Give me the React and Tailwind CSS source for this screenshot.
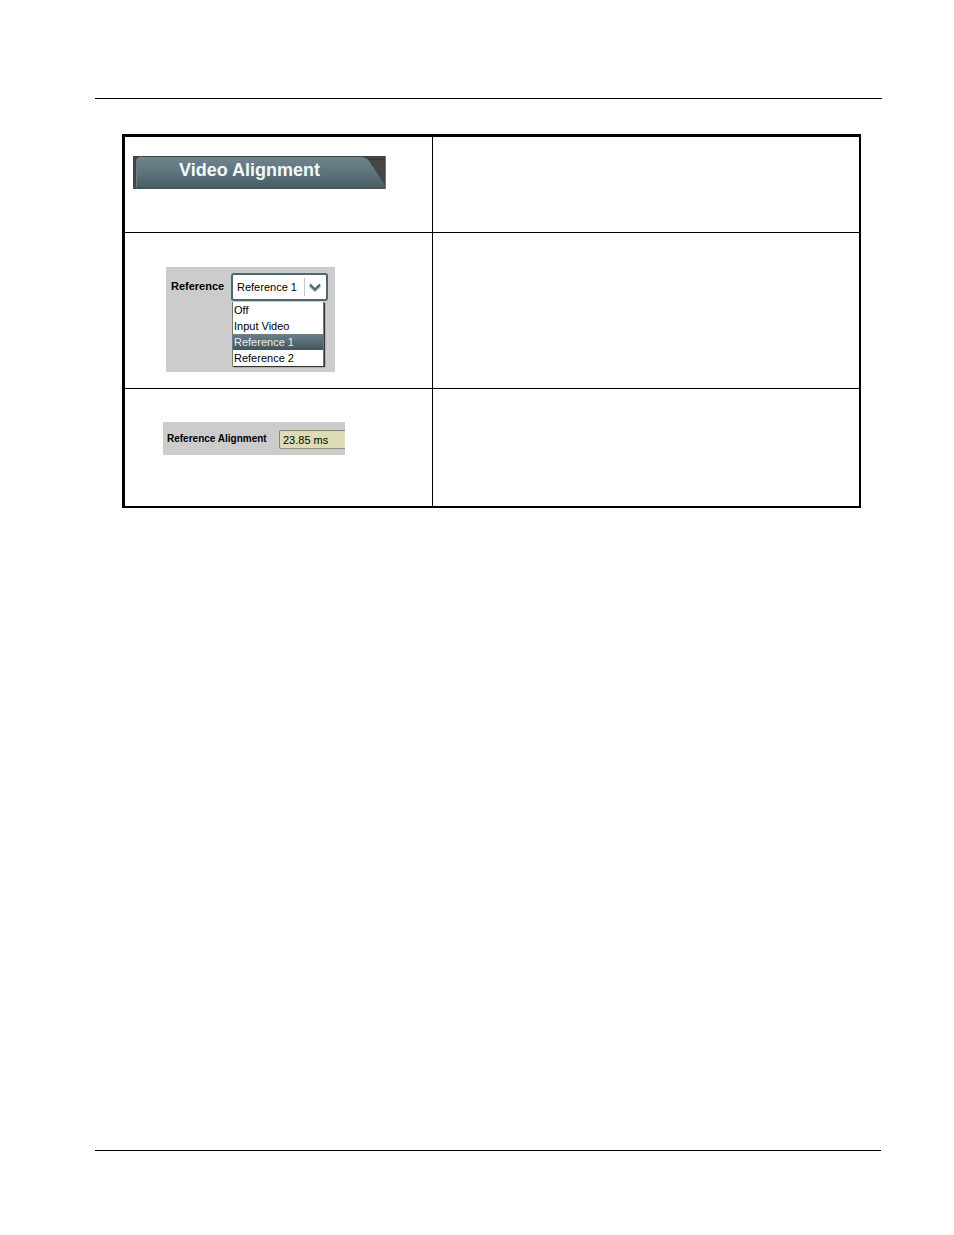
import { useState } from "react";

const OPTIONS = ["Off", "Input Video", "Reference 1", "Reference 2"];

function TabBanner({ title }) {
  return (
    <div className="relative w-[253px] h-[33px]">
      <svg
        className="absolute inset-0 w-full h-full"
        viewBox="0 0 253 33"
        preserveAspectRatio="none"
        aria-hidden="true"
      >
        <defs>
          <linearGradient id="tabFill" x1="0" y1="0" x2="0" y2="1">
            <stop offset="0" stopColor="#70858d" />
            <stop offset="0.5" stopColor="#5d727a" />
            <stop offset="1" stopColor="#455a62" />
          </linearGradient>
        </defs>
        <rect width="253" height="33" fill="#454545" />
        <rect x="230" y="3" width="22" height="1" fill="#333539" />
        <path d="M3 33V6Q3 1 9 1H227Q233 1 236 5L252 29V33Z" fill="url(#tabFill)" />
        <path d="M3.5 31V6Q4 1 9 1" fill="none" stroke="#6c8088" />
        <rect y="31" width="253" height="2" fill="#46535a" />
        <rect x="252" width="1" height="33" fill="#777777" />
      </svg>
      <h1 className="relative pl-[46px] pt-[3px] text-[18px] leading-[22px] font-bold text-[#f4f8f9]">
        {title}
      </h1>
    </div>
  );
}

function ReferencePanel() {
  const [reference, setReference] = useState("Reference 1");

  return (
    <div className="w-[169px] h-[105px] bg-[#cccccc] flex items-start pl-[5px] pt-[6px]">
      <label htmlFor="reference" className="w-[60px] pt-[6px] text-[11px] leading-[14px] font-bold text-black">
        Reference
      </label>
      <div className="relative w-[97px]">
        <select
          id="reference"
          value={reference}
          onChange={(e) => setReference(e.target.value)}
          className="block appearance-none w-full h-[28px] pl-1 pt-px bg-white border-2 border-[#4a6872] rounded-[3px] text-[11px] text-black outline-none"
        >
          {OPTIONS.map((option) => (
            <option key={option}>{option}</option>
          ))}
        </select>
        <svg
          className="absolute right-[3px] top-[4px] w-[22px] h-[20px] pointer-events-none"
          viewBox="0 0 22 20"
          fill="none"
          aria-hidden="true"
        >
          <path d="M1.5 1V19" stroke="#c4c8ca" />
          <path d="M7 9L12 13.5L17 9" stroke="#b4bfc3" strokeWidth="3" />
          <path d="M7 7.5L12 12.5L17 7.5" stroke="#48646f" strokeWidth="2.2" />
        </svg>

        {/* Open option list */}
        <div className="absolute left-px top-[29px] w-[92px] border-x border-[#777777] bg-white shadow-[1px_1px_1px_#333333]">
          {OPTIONS.map((option) => (
            <button
              key={option}
              type="button"
              onClick={() => setReference(option)}
              className={`block w-full h-4 pl-px text-left text-[11px] leading-4 ${
                option === reference
                  ? "bg-linear-to-b from-[#6b8089] to-[#43565e] text-[#e8edef]"
                  : "text-black"
              }`}
            >
              {option}
            </button>
          ))}
        </div>
      </div>
    </div>
  );
}

function AlignmentPanel() {
  return (
    <div className="w-[182px] h-[33px] bg-[#cccccc] flex items-start justify-between pl-1 pt-2">
      <label htmlFor="alignment" className="pt-[2px] text-[10px] leading-[14px] font-bold text-black whitespace-nowrap">
        Reference Alignment
      </label>
      <input
        id="alignment"
        readOnly
        value="23.85 ms"
        className="w-[66px] h-[19px] pl-[3px] bg-[#dddcb4] border border-r-0 border-t-[#85866f] border-l-[#85866f] border-b-[#93947a] rounded-l-[2px] text-[11px] text-black outline-none"
      />
    </div>
  );
}

export default function App() {
  return (
    <div className="min-h-screen bg-white flex flex-col pl-[95px] pr-[72px] pt-[98px] pb-[84px] font-['Liberation_Sans',Arial,sans-serif]">
      <hr className="border-0 h-px bg-black" />

      <main className="pl-[27px] pr-[21px] pt-[35px]">
        <table className="w-full table-fixed border-separate border-spacing-0 border-black border-t-3 border-l-3 border-r-2 border-b-2">
          <colgroup>
            <col className="w-[308px]" />
            <col />
          </colgroup>
          <tbody>
            <tr className="h-24">
              <td className="p-0 pl-2 pt-[19px] align-top border-r border-b border-black">
                <TabBanner title="Video Alignment" />
              </td>
              <td className="p-0 border-b border-black" />
            </tr>
            <tr className="h-[156px]">
              <td className="p-0 pl-[41px] pt-[34px] align-top border-r border-b border-black">
                <ReferencePanel />
              </td>
              <td className="p-0 border-b border-black" />
            </tr>
            <tr className="h-[117px]">
              <td className="p-0 pl-[38px] pt-[33px] align-top border-r border-black">
                <AlignmentPanel />
              </td>
              <td className="p-0" />
            </tr>
          </tbody>
        </table>
      </main>

      <hr className="mt-auto mr-px border-0 h-px bg-black" />
    </div>
  );
}
